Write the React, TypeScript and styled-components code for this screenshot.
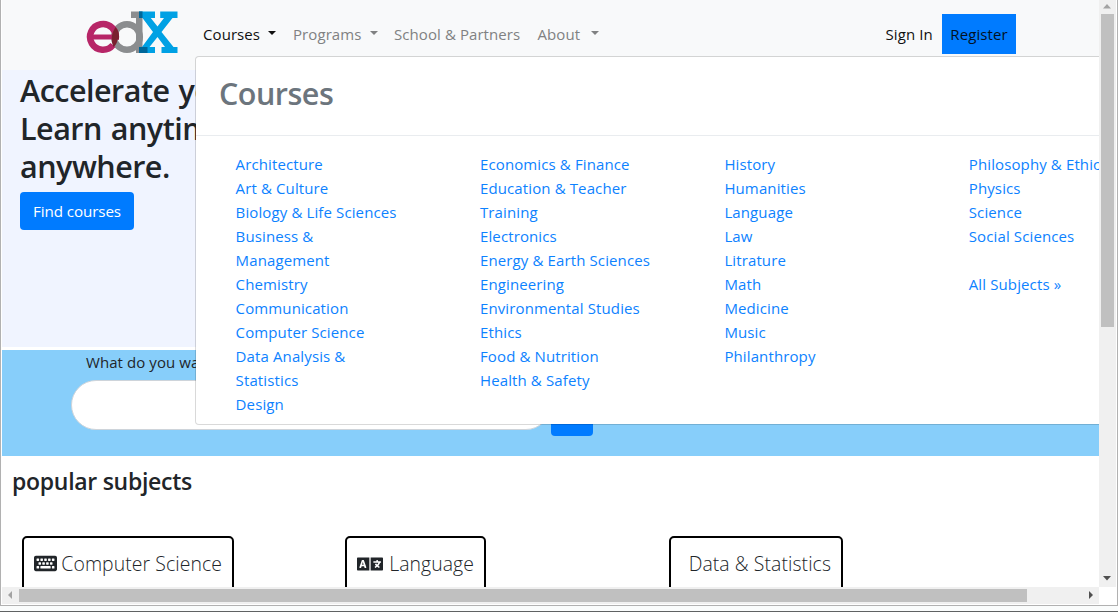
import React from "react";
import styled, { createGlobalStyle } from "styled-components";
import { FaKeyboard, FaLanguage } from "react-icons/fa";

const GlobalStyle = createGlobalStyle`
  * { box-sizing: border-box; }
  body {
    margin: 0;
    background: #fff;
    font-family: "Open Sans", "Noto Sans", sans-serif;
    font-size: 15px;
    font-weight: 400;
    letter-spacing: 0.08px;
    color: #212529;
    overflow: hidden;
  }
  h1, h2, h3, p, ul { margin: 0; padding: 0; }
  a { text-decoration: none; color: inherit; }
`;

const Frame = styled.div`
  width: 1118px;
  height: 612px;
  background: #fafcfc;
  border-bottom: 1px solid #5f6163;
`;

const Window = styled.div`
  display: grid;
  grid-template-columns: 1097px 17px;
  grid-template-rows: 587px 17px;
  width: 1118px;
  height: 606px;
  padding-left: 1px;
  background: #fff;
  border: 0 solid #b1b1b1;
  border-width: 0 1px 1px 1px;
`;

const Viewport = styled.main`
  position: relative;
  overflow: hidden;
  background: #fff;
`;

const Navbar = styled.header`
  display: flex;
  height: 70px;
  padding: 10px 83px 0 84px;
  background: #f8f9fa;
`;

const Logo = styled.svg`
  width: 94px;
  height: 46px;
  margin-right: 15px;
`;

const NavItem = styled.a<{ $width: number; $gap?: number; $active?: boolean }>`
  display: flex;
  align-items: center;
  width: ${(p) => p.$width}px;
  height: 40px;
  margin: 4px ${(p) => p.$gap ?? 0}px 0 0;
  padding: 0 8px;
  white-space: nowrap;
  color: ${(p) => (p.$active ? "#111" : "#808182")};
`;

const Caret = styled.i`
  margin: 0 0 3px auto;
  border-top: 4.8px solid currentColor;
  border-left: 4.8px solid transparent;
  border-right: 4.8px solid transparent;
`;

const Spacer = styled.div`
  flex: 1;
`;

const Register = styled.a`
  display: flex;
  align-items: center;
  justify-content: center;
  width: 74px;
  height: 40px;
  margin-top: 4px;
  background: #007bff;
  color: #03121f;
`;

const Hero = styled.section`
  height: 277px;
  padding: 1px 18px;
  background: #f0f4ff;
`;

const HeroTitle = styled.h1`
  width: 330px;
  font-size: 30.5px;
  font-weight: 600;
  letter-spacing: -0.5px;
  word-spacing: 1.5px;
  line-height: 38px;
  white-space: pre-line;
`;

const FindButton = styled.a`
  display: flex;
  align-items: center;
  justify-content: center;
  width: 114px;
  height: 38px;
  margin-top: 7px;
  border-radius: 4px;
  background: #007bff;
  color: #fff;
  font-size: 15.2px;
  font-weight: 400;
  letter-spacing: -0.1px;
`;

const SearchBand = styled.section`
  height: 106px;
  margin-top: 3px;
  padding: 0 0 0 69px;
  background: #87cefa;
`;

const SearchLabel = styled.p`
  height: 30px;
  padding-left: 15px;
  line-height: 25px;
`;

const SearchRow = styled.div`
  display: flex;
  align-items: flex-end;
`;

const SearchInput = styled.div`
  width: 480px;
  height: 50px;
  border: 1px solid #ced4da;
  border-radius: 25px;
  background: #fff;
`;

const SearchButton = styled.div`
  width: 42px;
  height: 38px;
  margin-bottom: -6px;
  border-radius: 4px;
  background: #007bff;
`;

const Subjects = styled.section`
  padding: 8px 10px 0;
`;

const SubjectsTitle = styled.h3`
  font-size: 23px;
  font-weight: 600;
  letter-spacing: -0.28px;
  line-height: 34px;
`;

const SubjectRow = styled.div`
  display: grid;
  grid-template-columns: 323px 324px 324px;
  align-items: start;
  padding: 38px 0 0 10px;
`;

const SubjectCard = styled.a<{ $width: number }>`
  display: flex;
  align-items: center;
  justify-content: space-between;
  width: ${(p) => p.$width}px;
  height: 60px;
  padding: 0 10px 5px;
  border: 2px solid #000;
  border-radius: 5px;
  font-size: 19.4px;
  font-weight: 300;
  white-space: nowrap;
`;

const Menu = styled.nav`
  position: absolute;
  top: 56px;
  left: 193px;
  width: 1010px;
  height: 369px;
  border: 1px solid rgba(0, 0, 0, 0.15);
  border-radius: 4px;
  background: #fff;
  background-clip: padding-box;
`;

const MenuTitle = styled.h2`
  height: 79px;
  padding: 17px 23px 0;
  border-bottom: 1px solid #e9ecef;
  color: #6c757d;
  font-size: 30.5px;
  font-weight: 600;
  letter-spacing: -0.5px;
  line-height: 38px;
`;

const MenuColumns = styled.div`
  display: grid;
  grid-template-columns: repeat(4, 244.4px);
  padding: 16px 0 0 39.6px;
`;

const MenuColumn = styled.ul`
  list-style: none;
  line-height: 24px;
  color: #0d82ff;
  letter-spacing: 0.12px;
  white-space: pre;
`;

const Bar = styled.div<{ $vertical?: boolean }>`
  display: flex;
  flex-direction: ${(p) => (p.$vertical ? "column" : "row")};
  justify-content: space-between;
  align-items: center;
  padding: ${(p) => (p.$vertical ? "0 1px 0 0" : "0 0 1px 0")};
  background: #f0f0f0;
`;

const Thumb = styled.div<{ $w: number; $h: number }>`
  width: ${(p) => p.$w}px;
  height: ${(p) => p.$h}px;
  background: #c0c0c0;
`;

const BarArrow = styled.svg`
  display: block;
  flex: none;
`;

const columns = [
  ["Architecture", "Art & Culture", "Biology & Life Sciences", "Business &\nManagement", "Chemistry", "Communication", "Computer Science", "Data Analysis &\nStatistics", "Design"],
  ["Economics & Finance", "Education & Teacher\nTraining", "Electronics", "Energy & Earth Sciences", "Engineering", "Environmental Studies", "Ethics", "Food & Nutrition", "Health & Safety"],
  ["History", "Humanities", "Language", "Law", "Litrature", "Math", "Medicine", "Music", "Philanthropy"],
  ["Philosophy & Ethics", "Physics", "Science", "Social Sciences\n ", "All Subjects »"],
];

function EdxLogo() {
  return (
    <Logo viewBox="0 0 94 46" aria-label="edX">
      <circle cx="41" cy="27" r="12.8" fill="none" stroke="#8b8d8f" strokeWidth="6.5" />
      <path d="M45 1.5h11.5V43H50V8h-5z" fill="#8b8d8f" />
      <path d="M29.7 29A12.9 12.9 0 1 0 27 35" fill="none" stroke="#b72667" strokeWidth="6.5" />
      <path d="M6 24.5h27v5H6z" fill="#b72667" />
      <path d="M53 1.5h16V8h-4.2l6.7 8.5L78 8h-3.8V1.5H91.5V8h-5L75.5 22l12 15h4v6h-16v-6h3.5l-7.5-10-8 10H69v6H53v-6h3l11-15L56.5 8H53z" fill="#00a1e4" />
      <path d="M53 1.5h3.5v6.5H53zM53 37h8.5v6H53z" fill="#006799" />
      <path d="M29.5 17Q34 22 32.8 29.5H31.5Q31 34 27.5 37Q23 27 29.5 17z" fill="#79202f" />
    </Logo>
  );
}

export default function App() {
  return (
    <Frame>
      <GlobalStyle />
      <Window>
        <Viewport>
          <Navbar>
            <EdxLogo />
            <NavItem $width={89} $gap={1} $active>Courses<Caret /></NavItem>
            <NavItem $width={101}>Programs<Caret /></NavItem>
            <NavItem $width={143.5}>School &amp; Partners</NavItem>
            <NavItem $width={77}>About<Caret /></NavItem>
            <Spacer />
            <NavItem $width={64.5} $active>Sign In</NavItem>
            <Register>Register</Register>
          </Navbar>
          <Hero>
            <HeroTitle>{"Accelerate your\nLearn anytime,\nanywhere."}</HeroTitle>
            <FindButton>Find courses</FindButton>
          </Hero>
          <SearchBand>
            <SearchLabel>What do you want</SearchLabel>
            <SearchRow>
              <SearchInput />
              <SearchButton />
            </SearchRow>
          </SearchBand>
          <Subjects>
            <SubjectsTitle>popular subjects</SubjectsTitle>
            <SubjectRow>
              <SubjectCard $width={212}><FaKeyboard size={23} />Computer Science</SubjectCard>
              <SubjectCard $width={141}><FaLanguage size={26} />Language</SubjectCard>
              <SubjectCard $width={174}><span />Data &amp; Statistics</SubjectCard>
            </SubjectRow>
          </Subjects>
          <Menu>
            <MenuTitle>Courses</MenuTitle>
            <MenuColumns>
              {columns.map((items) => (
                <MenuColumn key={items[0]}>
                  {items.map((item) => <li key={item}><a>{item}</a></li>)}
                </MenuColumn>
              ))}
            </MenuColumns>
          </Menu>
        </Viewport>
        <Bar $vertical>
          <BarArrow width="16" height="14"><path d="M4 8.5h8L8 4z" fill="#a3a3a3" /></BarArrow>
          <Thumb $w={13} $h={313} />
          <Spacer />
          <BarArrow width="16" height="17"><path d="M4 6h8L8 10.5z" fill="#505050" /></BarArrow>
        </Bar>
        <Bar>
          <BarArrow width="17" height="16"><path d="M10 4v8L6 8z" fill="#a3a3a3" /></BarArrow>
          <Thumb $w={1008} $h={13} />
          <Spacer />
          <BarArrow width="17" height="16"><path d="M7 4v8l4-4z" fill="#505050" /></BarArrow>
        </Bar>
      </Window>
    </Frame>
  );
}
